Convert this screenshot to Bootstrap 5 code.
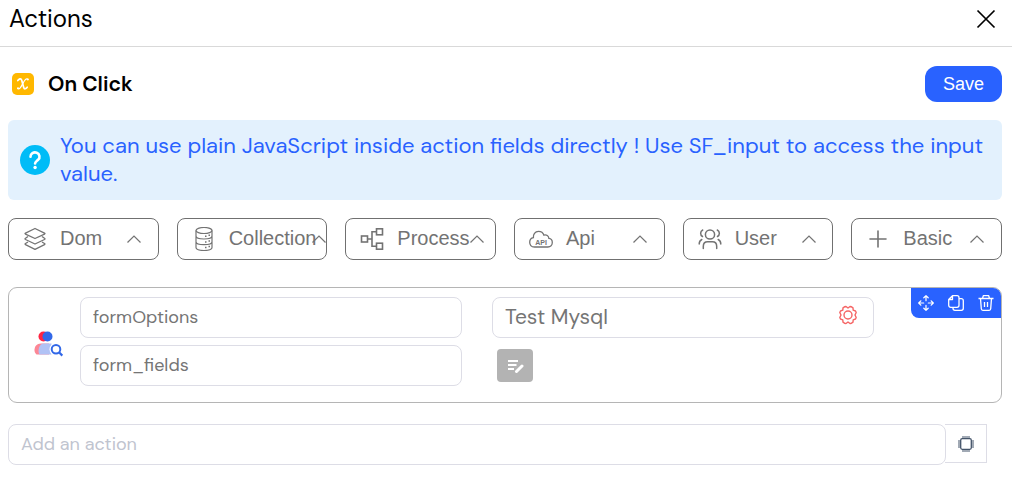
<!DOCTYPE html>
<html lang="en">
<head>
<meta charset="utf-8">
<meta name="viewport" content="width=device-width, initial-scale=1">
<title>Actions</title>
<link href="https://cdn.jsdelivr.net/npm/bootstrap@5.3.0/dist/css/bootstrap.min.css" rel="stylesheet">
<style>
body { font-family: "DM Sans", Inter, sans-serif; color: #000; background: #fff; }
svg { display: block; flex: none; }
.panel-head { height: 47px; padding: 0 16px 8px 9px; border-bottom: 1px solid #d9d9d9; }
.panel-title { font-size: 24px; line-height: 28px; }
.panel-body { padding: 19px 10px 0 8px; }
.event-row { gap: 14px; }
.event-name { font-size: 21px; line-height: 28px; }
.btn-save { height: 36px; padding: 0 18px; border-radius: 12px; background: #2962ff; color: #fff; font: 18px/28px "Liberation Sans", Arial, sans-serif; }
.btn-save:hover { background: #1e54e6; color: #fff; }
.hint { margin-top: 18px; padding: 12px; gap: 10px; border-radius: 6px; background: #e3f1fd; color: #2962ff; font-size: 22px; line-height: 28px; }
.groups { margin-top: 18px; display: grid; grid-template-columns: repeat(6, minmax(0, 1fr)); gap: 18px; }
.btn-group-kind { height: 42px; padding: 0 0 0 14px; border: 1px solid #707070; border-radius: 8px; color: #737373; font: 20px/28px "Liberation Sans", Arial, sans-serif; }
.btn-group-kind:hover { border-color: #333; }
.kind-label { min-width: 67px; margin-left: 13px; text-align: left; white-space: nowrap; padding-bottom: 2px; }
.action-box { margin-top: 27px; padding: 9px 0 16px 25px; border: 1px solid #b5b5b5; border-radius: 9px; }
.action-icon { width: 46px; flex: none; }
.action-fields { display: grid; grid-template-columns: repeat(2, minmax(0, 382px)); column-gap: 30px; row-gap: 7px; flex: 1; }
.field { height: 41px; padding: 0 12px 2px; border: 1px solid #dddde6; border-radius: 8px; color: #757575; font-size: 18px; line-height: 24px; }
.field-lg { min-width: 0; color: inherit; font-size: 21px; outline: 0; }
.field-box:focus-within { border-color: #86b7fe; }
.btn-edit { width: 36px; height: 33px; margin: 4px 0 0 5px; border-radius: 4px; background: #b3b3b3; }
.toolbox { top: 0; right: 0; height: 30px; padding: 0 7px; gap: 14px; border-radius: 0 8px 0 8px; background: #2962ff; }
.add-row { margin-top: 21px; padding-right: 15px; }
.add-row .field { color: #212529; }
.add-row .field::placeholder { color: #bfc4cf; }
.btn-chip { width: 42px; height: 39px; margin-left: -1px; border: 1px solid #dddde6; border-left: 0; border-radius: 0; }
</style>
</head>
<body>
<header class="panel-head d-flex align-items-center justify-content-between">
  <h1 class="panel-title fw-normal m-0">Actions</h1>
  <button type="button" class="btn border-0 p-0" aria-label="Close">
    <svg width="20" height="20" viewBox="0 0 20 20" fill="none" stroke="#000" stroke-width="1.7"><path d="M1.5 1.5l17 17M18.5 1.5l-17 17"/></svg>
  </button>
</header>
<main class="panel-body">
  <div class="d-flex align-items-center justify-content-between">
    <div class="event-row d-flex align-items-center ps-1">
      <svg width="22" height="22" viewBox="0 0 22 22"><rect width="22" height="22" rx="5" fill="#ffb800"/><path d="M5.800 7.600C7 5.900 9 4.800 9.700 7.200l2 7.200c.6 2.200 2.300 1.500 3.500-.2" fill="none" stroke="#fff" stroke-width="1.700" stroke-linecap="round"/><path d="M16 6.300c-2-1.200-3.200.7-5.200 4.200-2 3.700-3 6.200-5.200 5" fill="none" stroke="#fff" stroke-width="1.200" stroke-linecap="round"/><circle cx="15.800" cy="6.500" r="1" fill="#fff"/><circle cx="6" cy="15.200" r="1" fill="#fff"/></svg>
      <h2 class="event-name fw-semibold m-0">On Click</h2>
    </div>
    <button type="button" class="btn btn-save border-0">Save</button>
  </div>

  <div class="hint d-flex align-items-center">
    <svg width="30" height="30" viewBox="0 0 30 30"><circle cx="15" cy="15" r="15" fill="#00bcf7"/><path d="M10.500 11.800a4.500 4.300 0 1 1 7.600 3c-1.700 1.500-3 2-3 3.700" fill="none" stroke="#fff" stroke-width="2.600" stroke-linecap="round"/><circle cx="15.100" cy="22.500" r="1.700" fill="#fff"/></svg>
    <p class="m-0">You can use plain JavaScript inside action fields directly ! Use SF_input to access the input value.</p>
  </div>

  <div class="groups">
    <button type="button" class="btn btn-group-kind d-flex align-items-center">
      <svg width="24" height="24" viewBox="0 0 24 24" fill="none" stroke="#737373" stroke-width="1.300" stroke-linejoin="round"><path d="M12 1.500l9.500 4.600q1 .5 0 1L12 11.500 2.500 7.100q-1-.5 0-1zM5 9.500l-2.500 1.800q-1 .6 0 1.200L12 17l9.500-4.500q1-.6 0-1.200L19 9.500M5 15l-2.500 1.500q-1 .6 0 1.200L12 22.300l9.500-4.600q1-.6 0-1.200L19 15"/></svg>
      <span class="kind-label">Dom</span>
      <svg width="14" height="8" viewBox="0 0 14 8" fill="none" stroke="#737373" stroke-width="1.200"><path d="M.5 7.500L7 1l6.500 6.500"/></svg>
    </button>
    <button type="button" class="btn btn-group-kind d-flex align-items-center">
      <svg width="24" height="24" viewBox="0 0 24 24" fill="none" stroke="#737373" stroke-width="1.200"><ellipse cx="12" cy="3.500" rx="8" ry="3"/><path d="M4 3.500v17c0 4 16 4 16 0v-17M4 9c0 4 16 4 16 0M4 14.700c0 4 16 4 16 0"/><path d="M13 9.300h1.500M16.500 8.300H18M13 15h1.500M16.500 14H18M13 20.500h1.500M16.500 19.500H18" stroke-width="1.500"/></svg>
      <span class="kind-label">Collection</span>
      <svg width="14" height="8" viewBox="0 0 14 8" fill="none" stroke="#737373" stroke-width="1.200"><path d="M.5 7.500L7 1l6.500 6.500"/></svg>
    </button>
    <button type="button" class="btn btn-group-kind d-flex align-items-center">
      <svg width="24" height="24" viewBox="0 0 24 24" fill="none" stroke="#737373" stroke-width="1.600"><rect x="1.500" y="9" width="6" height="6"/><rect x="16.500" y="1.800" width="6" height="6"/><rect x="16.500" y="16.200" width="6" height="6"/><path d="M7.500 12H12M16.500 4.800H12v14.400h4.500"/></svg>
      <span class="kind-label">Process</span>
      <svg width="14" height="8" viewBox="0 0 14 8" fill="none" stroke="#737373" stroke-width="1.200"><path d="M.5 7.500L7 1l6.500 6.500"/></svg>
    </button>
    <button type="button" class="btn btn-group-kind d-flex align-items-center">
      <svg width="24" height="24" viewBox="0 0 24 24" fill="none" stroke="#737373" stroke-width="1.300"><path d="M5.500 20C2 20 .700 17.800.700 15.300c0-2.600 1.700-4.300 3.700-4.600C4 7.500 6 4.300 9.500 4.300c2.600 0 4.700 1.500 5.400 3.800 2.600-.7 4.800.8 5 3.300 2.300.2 3.400 2.100 3.400 4.200 0 2.500-1.900 4.400-4.400 4.400z"/><text x="12" y="17.800" text-anchor="middle" font-family="Liberation Sans, Arial, sans-serif" font-size="7" font-weight="700" fill="#737373" stroke="none">API</text></svg>
      <span class="kind-label">Api</span>
      <svg width="14" height="8" viewBox="0 0 14 8" fill="none" stroke="#737373" stroke-width="1.200"><path d="M.5 7.500L7 1l6.500 6.500"/></svg>
    </button>
    <button type="button" class="btn btn-group-kind d-flex align-items-center">
      <svg width="24" height="24" viewBox="0 0 24 24" fill="none" stroke="#737373" stroke-width="1.500" stroke-linecap="round"><circle cx="12" cy="7.500" r="4.600"/><path d="M5.300 21.500v-2c0-3 2-4.700 4.300-4.700h4.800c2.300 0 4.300 1.700 4.300 4.700v2M4.700 3C2 4.500 2 8 4.500 9.500M19.300 3c2.700 1.500 2.700 5 .2 6.500M3.800 12.500c-2 1-2.600 2.500-2.600 4.500M20.200 12.500c2 1 2.600 2.500 2.600 4.500"/></svg>
      <span class="kind-label">User</span>
      <svg width="14" height="8" viewBox="0 0 14 8" fill="none" stroke="#737373" stroke-width="1.200"><path d="M.5 7.500L7 1l6.500 6.500"/></svg>
    </button>
    <button type="button" class="btn btn-group-kind d-flex align-items-center">
      <svg width="24" height="24" viewBox="0 0 24 24" fill="none" stroke="#737373" stroke-width="1.600" stroke-linecap="round"><path d="M12 4v16M4 12h16"/></svg>
      <span class="kind-label">Basic</span>
      <svg width="14" height="8" viewBox="0 0 14 8" fill="none" stroke="#737373" stroke-width="1.200"><path d="M.5 7.500L7 1l6.500 6.500"/></svg>
    </button>
  </div>

  <section class="action-box position-relative d-flex align-items-center">
    <div class="action-icon pt-1">
      <svg width="30" height="26" viewBox="0 0 30 26"><circle cx="9.500" cy="5.500" r="5" fill="#ff2442"/><circle cx="13.500" cy="5.500" r="5" fill="#3268e8"/><path d="M7 12.500h8v11H2.500C-1.200 21 0 12.500 7 12.500z" fill="#fc8795"/><path d="M10 12.500h7.500v11H5.500c-2-2.500-1-11 4.500-11z" fill="#b1c2f5"/><circle cx="22" cy="18.300" r="6.500" fill="#fff"/><circle cx="22" cy="18.300" r="4.300" fill="#fff" stroke="#3268e8" stroke-width="2"/><path d="M25 21.300l3.300 3.300" stroke="#3268e8" stroke-width="2.200"/></svg>
    </div>
    <div class="action-fields">
      <input type="text" class="form-control field" value="formOptions" aria-label="Variable">
      <div class="field field-box d-flex align-items-center">
        <input type="text" class="field-lg border-0 p-0 bg-transparent flex-grow-1" value="Test Mysql" aria-label="Source">
        <button type="button" class="btn border-0 p-0 me-1 pb-1" aria-label="Settings">
          <svg width="18" height="20" viewBox="0 0 18 20" fill="none" stroke="#f56565" stroke-width="1.400" stroke-linejoin="round"><circle cx="9" cy="10" r="4"/><path d="M5.500 1.800L7 1.500 9 3l2-1.500 1.500.3 1.500 1 .2 2.400 2.300.8.700 1.500L16 10l1.200 2.500-.7 1.500-2.300.8-.2 2.400-1.500 1-1.500.3L9 17l-2 1.500-1.500-.3-1.500-1-.2-2.400-2.300-.8-.7-1.500L2 10 .8 7.500 1.500 6l2.300-.8L4 2.800z"/></svg>
        </button>
      </div>
      <input type="text" class="form-control field" value="form_fields" aria-label="Query">
      <button type="button" class="btn btn-edit border-0 p-0 d-flex align-items-center justify-content-center" aria-label="Edit">
        <svg width="18" height="16" viewBox="0 0 18 16" fill="none" stroke="#fff" stroke-width="2"><path d="M2 3h10M2 7h8.500M2 11h6"/><path d="M10.500 13.500L16 8" stroke-width="3" stroke-linecap="round"/></svg>
      </button>
    </div>
    <div class="toolbox position-absolute d-flex align-items-center">
      <button type="button" class="btn border-0 p-0" aria-label="Move"><svg width="16" height="16" viewBox="0 0 16 16" fill="none" stroke="#fff" stroke-width="1.200" stroke-linecap="round" stroke-linejoin="round"><path d="M8 .7v5M8 10.300v5M.7 8h5M10.300 8h5M5.800 2.800L8 .7l2.200 2.100M5.800 13.200L8 15.300l2.200-2.100M2.800 5.800L.7 8l2.100 2.200M13.200 5.800L15.300 8l-2.100 2.200"/></svg></button>
      <button type="button" class="btn border-0 p-0" aria-label="Duplicate"><svg width="16" height="16" viewBox="0 0 16 16" fill="none" stroke="#fff" stroke-width="1.300" stroke-linejoin="round"><path d="M4.500.7H9a2 2 0 0 1 2 2v7.600a2 2 0 0 1-2 2H2.700a2 2 0 0 1-2-2V4.500zM4.500.7v3.800H.7M11 3.700h2.300a2 2 0 0 1 2 2v7.600a2 2 0 0 1-2 2H7a2 2 0 0 1-2-2v-1"/></svg></button>
      <button type="button" class="btn border-0 p-0" aria-label="Delete"><svg width="16" height="16" viewBox="0 0 16 16" fill="none" stroke="#fff" stroke-width="1.300" stroke-linejoin="round"><path d="M.5 3.500h15M4.500 3.500l.8-2.800h5.400l.8 2.800M2.500 3.500l.8 10.300a1.600 1.600 0 0 0 1.600 1.500h6.200a1.600 1.600 0 0 0 1.600-1.500l.8-10.300M6.500 7v5M9.500 7v5"/></svg></button>
    </div>
  </section>

  <div class="add-row d-flex align-items-start">
    <input type="text" class="form-control field" placeholder="Add an action" aria-label="Add an action">
    <button type="button" class="btn btn-chip p-0 d-flex align-items-center justify-content-center flex-shrink-0" aria-label="Options">
      <svg width="16" height="16" viewBox="0 0 16 16" fill="none" stroke="#44546a" stroke-width="1.300"><rect x="2.700" y="2.700" width="10.600" height="10.600" rx="1.500"/><path d="M5 0v2.500M7 0v2.500M9 0v2.500M11 0v2.500M5 13.500V16M7 13.500V16M9 13.500V16M11 13.500V16M0 5h2.500M0 7h2.500M0 9h2.500M0 11h2.500M13.500 5H16M13.500 7H16M13.500 9H16M13.500 11H16" stroke-width="1"/></svg>
    </button>
  </div>
</main>
<script src="https://cdn.jsdelivr.net/npm/bootstrap@5.3.0/dist/js/bootstrap.bundle.min.js"></script>
</body>
</html>
